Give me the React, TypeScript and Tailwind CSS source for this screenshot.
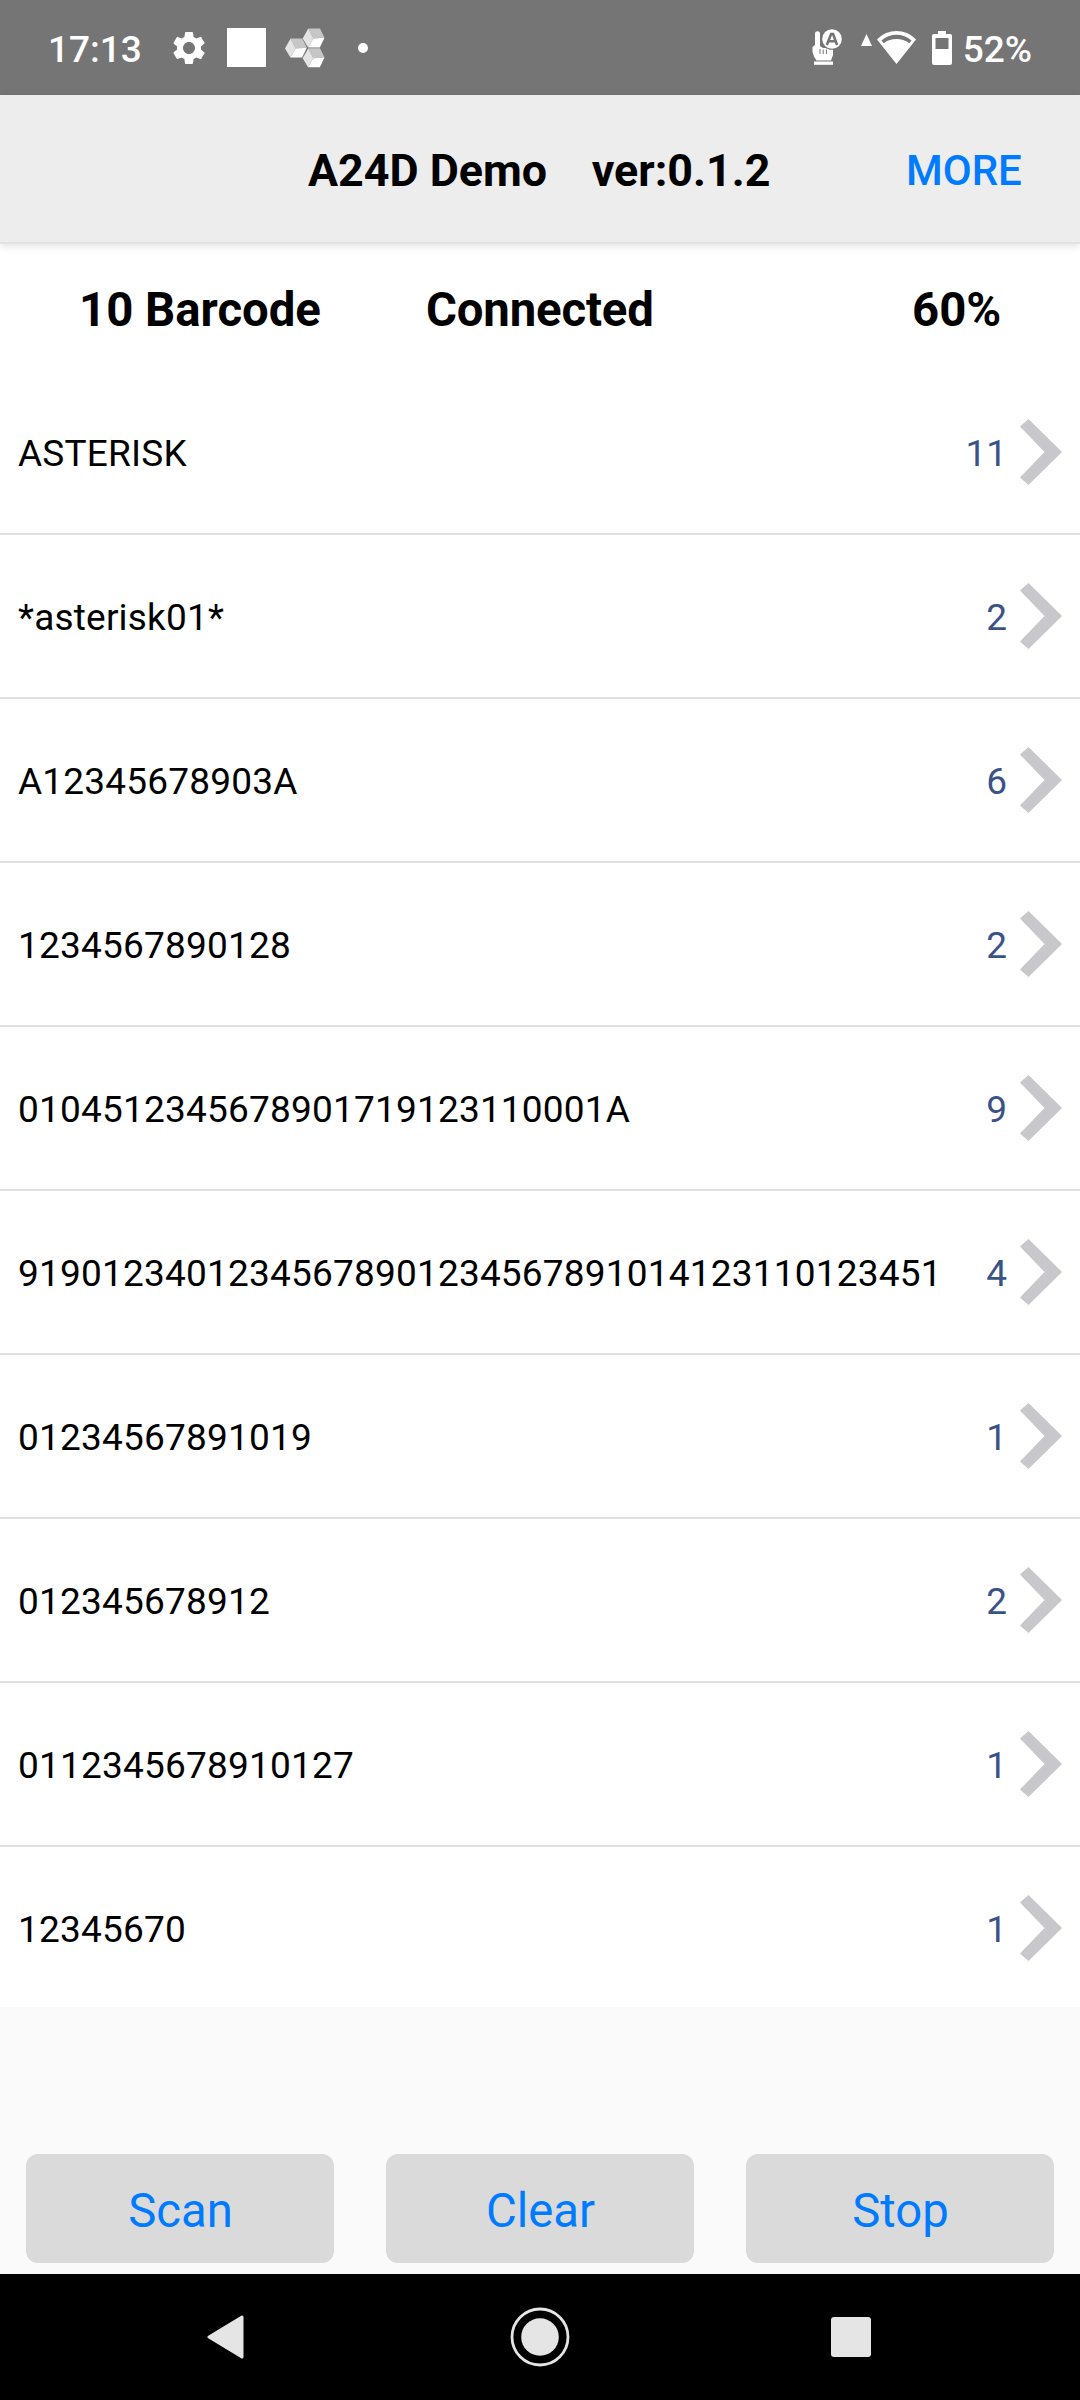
import React from 'react';
import { MdSettings } from 'react-icons/md';

const barcodes = [
  { code: 'ASTERISK', count: 11 },
  { code: '*asterisk01*', count: 2 },
  { code: 'A12345678903A', count: 6 },
  { code: '1234567890128', count: 2 },
  { code: '0104512345678901719123110001A', count: 9 },
  { code: '91901234012345678901234567891014123110123451', count: 4 },
  { code: '01234567891019', count: 1 },
  { code: '012345678912', count: 2 },
  { code: '0112345678910127', count: 1 },
  { code: '12345670', count: 1 },
];

const actions = ['Scan', 'Clear', 'Stop'];

function Cube() {
  return (
    <>
      <path d="M5.600 0h11.700l4.500 9.300-11.200.6z" fill="#c6c6c6" />
      <path d="M5.600 0 0 10l5.400 9 5.200-9.100z" fill="#e4e4e4" />
      <path d="M10.600 9.900l11.200-.6-4.700 9.700H5.400z" fill="#fff" />
    </>
  );
}

function CubesIcon() {
  return (
    <svg className="w-[40px] h-[40px]" viewBox="0 0 40 40">
      <g transform="translate(17.700 .5)"><Cube /></g>
      <g transform="translate(0 10.500)"><Cube /></g>
      <g transform="translate(17.700 20.300)"><Cube /></g>
    </svg>
  );
}

function HandIcon() {
  return (
    <svg className="w-[32px] h-[38px]" viewBox="0 0 32 38">
      <path
        d="M3 4.500c0-3 5-3 5 0V17l3 2h10v7l-2 5.500H4.500L2 27.500.5 23v-5L3 16z"
        fill="#fff"
      />
      <path d="M8 20v5M11.200 20.500v4.500M14.400 20.500v4.500" stroke="#757575" strokeWidth="1" />
      <rect x="2" y="32.500" width="19" height="3.300" fill="#fff" />
      <circle cx="20" cy="10" r="10.800" fill="#757575" />
      <circle cx="20" cy="10" r="9.800" fill="#fff" />
      <path d="M14.800 16l4.300-11h2l4 11M16.500 12.300h7" stroke="#757575" strokeWidth="2.600" fill="none" />
    </svg>
  );
}

function StatusBar() {
  return (
    <div className="h-[95px] bg-[#757575] text-white flex items-center pl-[48px] pr-[48px]">
      <span className="text-[37px] leading-[44px] font-medium w-[121px] pt-[4px]">17:13</span>
      <MdSettings className="w-[40px] h-[40px]" />
      <div className="ml-[18px] w-[39px] h-[39px] bg-white"></div>
      <div className="ml-[19px]">
        <CubesIcon />
      </div>
      <div className="ml-[33px] w-[10px] h-[10px] rounded-full bg-white"></div>

      <div className="ml-auto flex items-center">
        <HandIcon />
        <svg className="ml-[17px] w-[11px] h-[12px] mb-[15px]" viewBox="0 0 11 12">
          <path d="M5.500 0 11 12H0z" fill="#fff" />
        </svg>
        <svg className="ml-[5px] w-[39px] h-[33px]" viewBox="0 0 39 33">
          <path d="M0 8.500C11-2.800 28-2.800 39 8.500L19.500 33z" fill="#fff" />
          <path d="M4.500 9.500C13 1.800 26 1.800 34.500 9.500l-2.300 2.800c-7-5.600-18.400-5.600-25.400 0z" fill="#757575" />
        </svg>
        <svg className="ml-[16px] w-[20px] h-[34px]" viewBox="0 0 20 34">
          <path d="M6 0h8v3h4a2 2 0 0 1 2 2v27a2 2 0 0 1-2 2H2a2 2 0 0 1-2-2V5a2 2 0 0 1 2-2h4z" fill="#fff" />
          <path d="M3.500 7h13v11h-13z" fill="#757575" />
        </svg>
        <span className="ml-[11px] text-[37px] leading-[44px] font-medium pt-[4px]">52%</span>
      </div>
    </div>
  );
}

function Chevron() {
  return (
    <svg className="w-[42px] h-[66px]" viewBox="0 0 42 66">
      <path d="M8.500 0 42 33 8.500 66 0 58.500 24.500 33 0 7.500z" fill="#c7c7cc" />
    </svg>
  );
}

export default function App() {
  return (
    <div className="w-[1080px] h-[2400px] flex flex-col bg-[#fafafa] text-black font-['Roboto',sans-serif] overflow-hidden">
      <StatusBar />

      <header className="relative h-[149px] shrink-0 bg-[#ededed] border-b-2 border-[#e2e2e2] shadow-[0_2px_8px_rgba(0,0,0,0.12)] flex items-center pt-[5px]">
        <h1 className="ml-[308px] w-[598px] text-[44.800px] leading-[52px] font-bold whitespace-pre">A24D Demo    ver:0.1.2</h1>
        <button className="text-[42px] leading-[52px] font-medium text-[#007aff]">MORE</button>
      </header>

      <div className="h-[127px] shrink-0 bg-white flex items-center text-[47.300px] leading-[56px] font-bold pt-[4px]">
        <span className="pl-[79px] w-[426px]">10 Barcode</span>
        <span className="w-[486px] tracking-[-0.150px]">Connected</span>
        <span>60%</span>
      </div>

      <ul className="h-[1636px] shrink-0 bg-white overflow-hidden">
        {barcodes.map(b => (
          <li key={b.code} className="h-[164px] border-b-2 border-[#e0e0e0] flex items-center pl-[18px] pr-[18px] text-[37px] leading-[44px]">
            <span className="flex-1 pt-[3px] tracking-[0.200px]">{b.code}</span>
            <span className="text-[#3b5287] mr-[13px] pt-[3px]">{b.count}</span>
            <Chevron />
          </li>
        ))}
      </ul>

      <div className="flex-1 flex items-end gap-[52px] px-[26px] pb-[11px]">
        {actions.map(a => (
          <button key={a} className="flex-1 h-[109px] rounded-[12px] bg-[#dadada] text-[#007aff] text-[47.300px] leading-[56px] pt-[4px] pl-[1px]">
            {a}
          </button>
        ))}
      </div>

      {/* system navigation */}
      <nav className="h-[126px] shrink-0 bg-black flex items-center pl-[207px]">
        <svg className="w-[37px] h-[44px]" viewBox="0 0 37 44">
          <path d="M2 22 35 2v40z" fill="#e5e5e5" stroke="#e5e5e5" strokeWidth="3" strokeLinejoin="round" />
        </svg>
        <svg className="ml-[266px] w-[60px] h-[60px]" viewBox="0 0 60 60">
          <circle cx="30" cy="30" r="28" fill="none" stroke="#e5e5e5" strokeWidth="2.800" />
          <circle cx="30" cy="30" r="18.800" fill="#e5e5e5" />
        </svg>
        <div className="ml-[261px] w-[40px] h-[40px] rounded-[3px] bg-[#e5e5e5]"></div>
      </nav>
    </div>
  );
}
